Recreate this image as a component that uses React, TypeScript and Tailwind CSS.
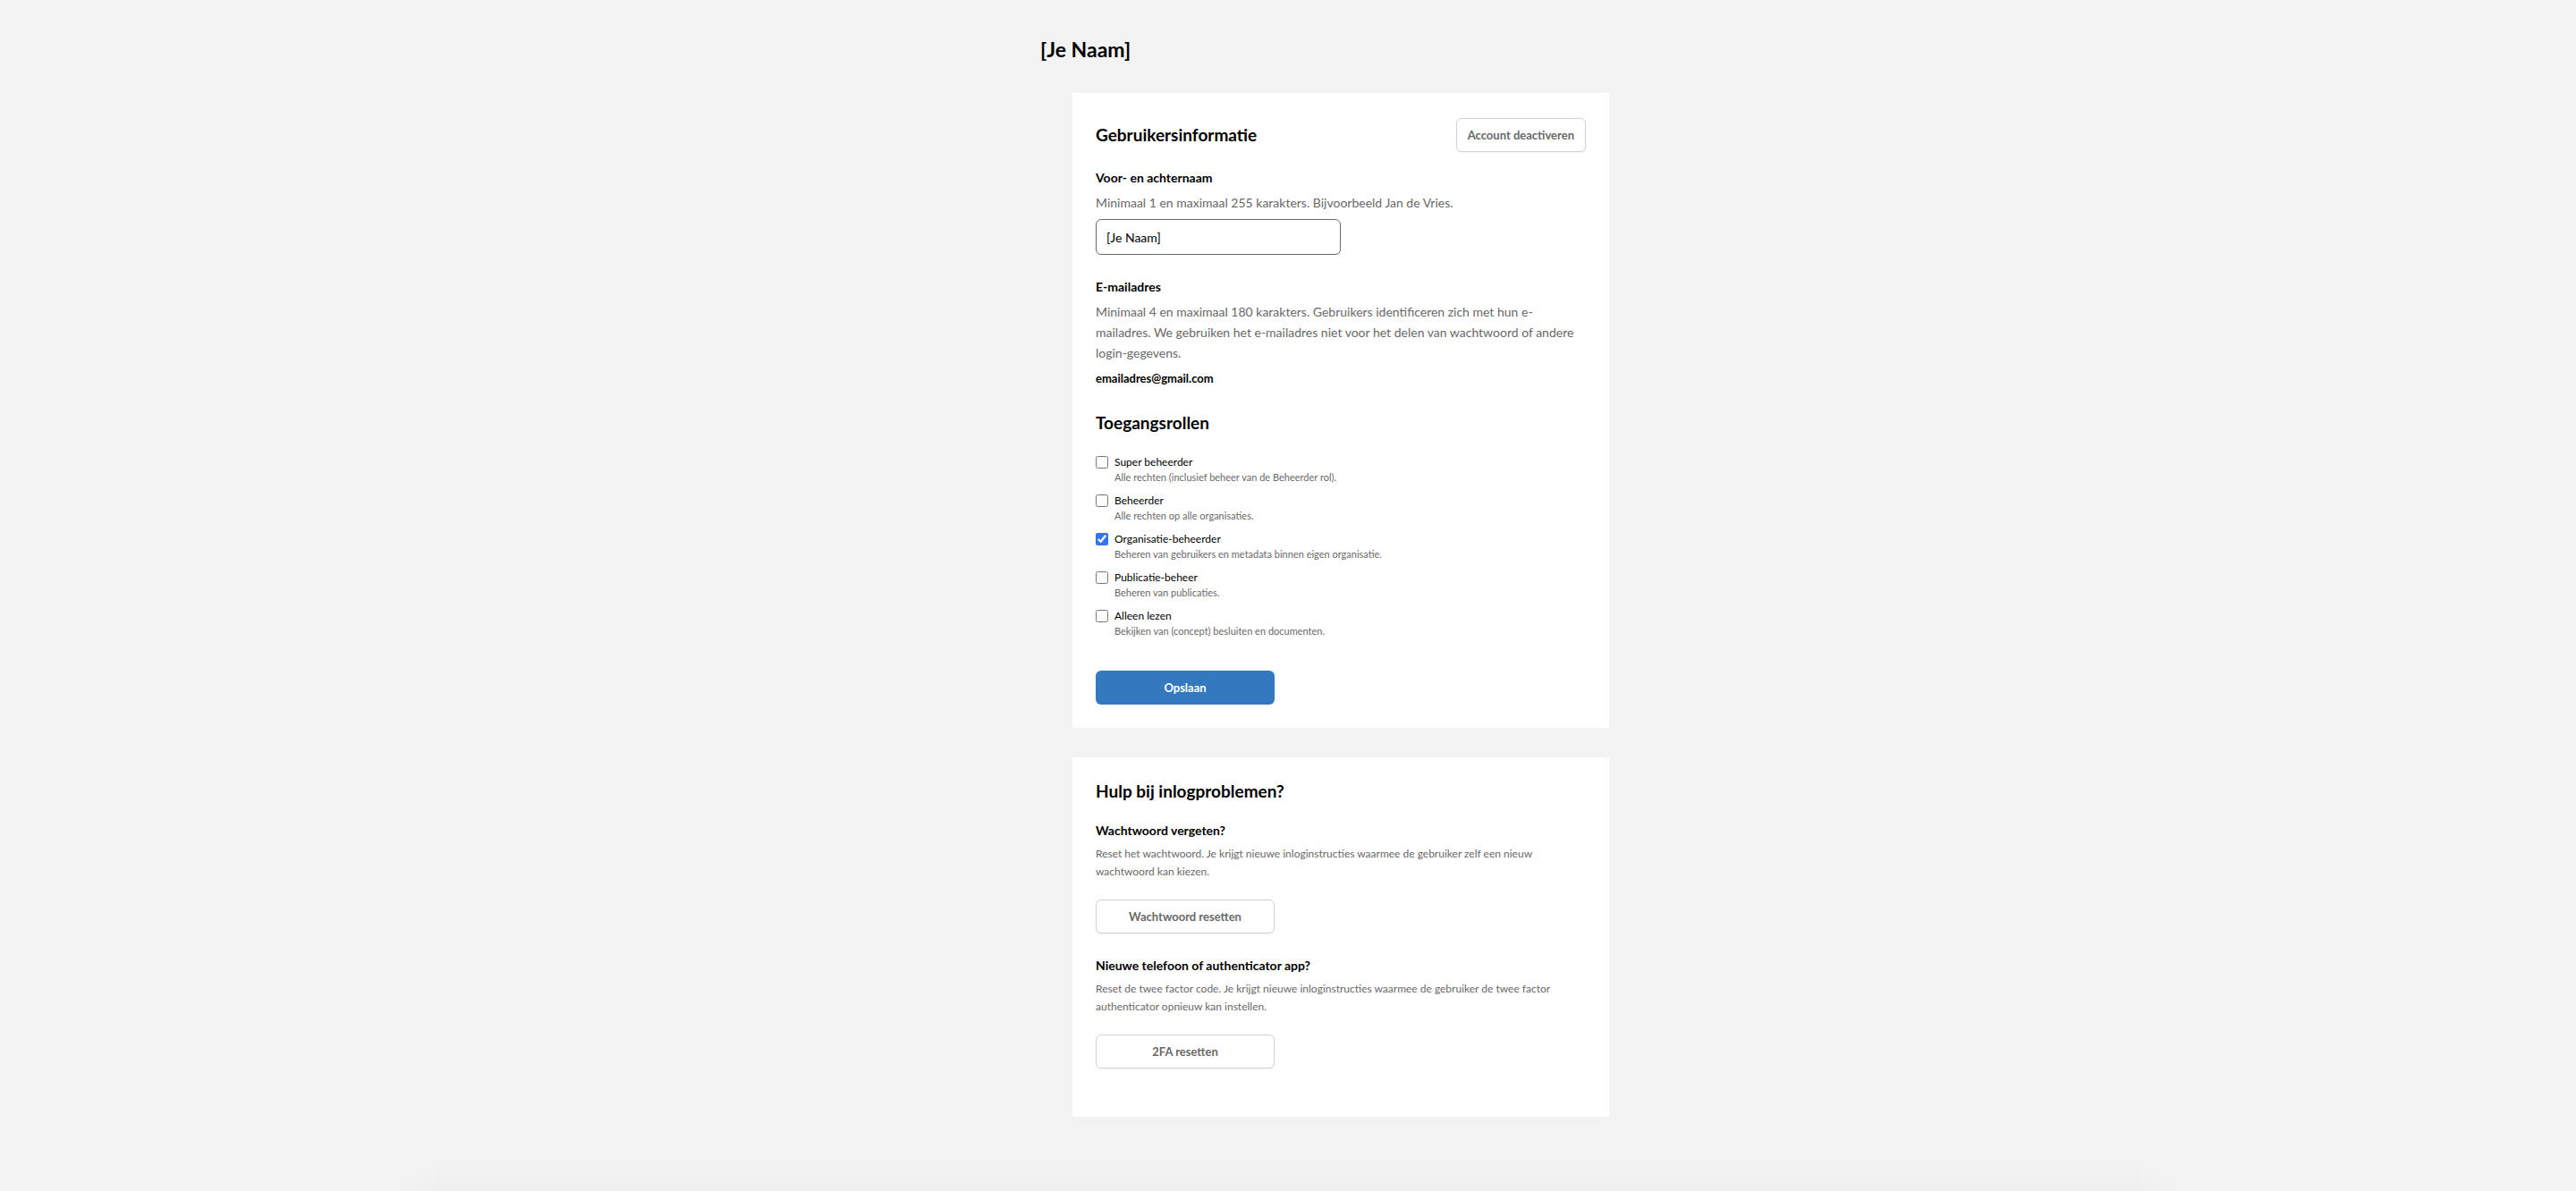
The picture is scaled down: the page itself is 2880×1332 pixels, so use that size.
import { useState } from "react";
import type { ReactNode } from "react";

type Role = { id: string; label: string; description: string };

const roles: Role[] = [
  { id: "super", label: "Super beheerder", description: "Alle rechten (inclusief beheer van de Beheerder rol)." },
  { id: "beheerder", label: "Beheerder", description: "Alle rechten op alle organisaties." },
  { id: "organisatie", label: "Organisatie-beheerder", description: "Beheren van gebruikers en metadata binnen eigen organisatie." },
  { id: "publicatie", label: "Publicatie-beheer", description: "Beheren van publicaties." },
  { id: "lezen", label: "Alleen lezen", description: "Bekijken van (concept) besluiten en documenten." },
];

function OutlineButton({ children, wide = false }: { children: ReactNode; wide?: boolean }) {
  return (
    <button
      type="button"
      className={
        "h-[38px] rounded-md border border-[#cfd3de] bg-white text-[13px] leading-5 font-bold text-[#696969] shadow-xs " +
        (wide ? "block w-[200px] max-w-full" : "px-3")
      }
    >
      {children}
    </button>
  );
}

function HelpItem({ title, text, action }: { title: string; text: string; action: string }) {
  return (
    <div>
      <h3 className="text-[14px] leading-5 font-bold">{title}</h3>
      <p className="mt-1.5 text-[12px] leading-5 text-[#696969]">{text}</p>
      <div className="mt-[21px]">
        <OutlineButton wide>{action}</OutlineButton>
      </div>
    </div>
  );
}

export default function App() {
  const [name, setName] = useState("[Je Naam]");
  const [active, setActive] = useState<string[]>(["organisatie"]);

  const toggle = (id: string) =>
    setActive((ids) => (ids.includes(id) ? ids.filter((i) => i !== id) : [...ids, id]));

  return (
    <div className="flex min-h-screen flex-col overflow-hidden bg-[#f3f3f3] font-['Lato','Noto_Sans',sans-serif] text-black">
      <main className="mx-auto w-full max-w-[718px] grow pt-[39px] pb-10 pl-[82px]">
        <h1 className="text-[23px] leading-8 font-bold">[Je Naam]</h1>

        <div className="mt-[33px] ml-9 flex flex-col gap-[33px]">
          <form className="bg-white px-[26px] pt-7 pb-[26px]" onSubmit={(e) => e.preventDefault()}>
            <div className="flex items-center justify-between">
              <h2 className="text-[19px] leading-7 font-bold">Gebruikersinformatie</h2>
              <OutlineButton>Account deactiveren</OutlineButton>
            </div>

            <div className="mt-[19px]">
              <label htmlFor="name" className="block text-[14px] leading-5 font-bold">
                Voor- en achternaam
              </label>
              <p id="name-help" className="mt-1.5 text-[14px] leading-[23px] text-[#696969]">
                Minimaal 1 en maximaal 255 karakters. Bijvoorbeeld Jan de Vries.
              </p>
              <input
                id="name"
                type="text"
                aria-describedby="name-help"
                value={name}
                onChange={(e) => setName(e.target.value)}
                className="mt-[7px] block h-10 w-[274px] max-w-full rounded-md border border-[#696969] bg-white px-[11px] text-[14px] leading-5"
              />
            </div>

            <div className="mt-[26px]">
              <h3 className="text-[14px] leading-5 font-bold">E-mailadres</h3>
              <p className="mt-1.5 text-[14px] leading-[23px] text-[#696969]">
                Minimaal 4 en maximaal 180 karakters. Gebruikers identificeren zich met hun e-mailadres. We
                gebruiken het e-mailadres niet voor het delen van wachtwoord of andere login-gegevens.
              </p>
              <p className="mt-[7px] text-[13px] leading-5 font-bold">emailadres@gmail.com</p>
            </div>

            <fieldset className="mt-[26px]">
              <legend className="text-[19px] leading-7 font-bold">Toegangsrollen</legend>
              <div className="mt-[21px] flex flex-col gap-[9px]">
                {roles.map((role) => (
                  <div key={role.id} className="flex items-start gap-[7px]">
                    <input
                      id={role.id}
                      type="checkbox"
                      aria-describedby={role.id + "-help"}
                      checked={active.includes(role.id)}
                      onChange={() => toggle(role.id)}
                      className="mt-0.5 size-[14px] shrink-0 accent-[#3573f5]"
                    />
                    <div>
                      <label htmlFor={role.id} className="block text-[12px] leading-[18px]">
                        {role.label}
                      </label>
                      <p id={role.id + "-help"} className="text-[11px] leading-4 text-[#696969]">
                        {role.description}
                      </p>
                    </div>
                  </div>
                ))}
              </div>
            </fieldset>

            <button
              type="submit"
              className="mt-9 block h-[38px] w-[200px] max-w-full rounded-md bg-[#3478bf] text-[13px] leading-5 font-bold text-white"
            >
              Opslaan
            </button>
          </form>

          <section className="bg-white px-[26px] pt-6 pb-[54px]">
            <h2 className="text-[19px] leading-7 font-bold">Hulp bij inlogproblemen?</h2>
            <div className="mt-5 flex flex-col gap-[26px]">
              <HelpItem
                title="Wachtwoord vergeten?"
                text="Reset het wachtwoord. Je krijgt nieuwe inloginstructies waarmee de gebruiker zelf een nieuw wachtwoord kan kiezen."
                action="Wachtwoord resetten"
              />
              <HelpItem
                title="Nieuwe telefoon of authenticator app?"
                text="Reset de twee factor code. Je krijgt nieuwe inloginstructies waarmee de gebruiker de twee factor authenticator opnieuw kan instellen."
                action="2FA resetten"
              />
            </div>
          </section>
        </div>
      </main>
      <div className="mx-auto h-0 w-[67%] shadow-[0_10px_40px_10px_rgba(0,0,0,0.05)]" />
    </div>
  );
}
